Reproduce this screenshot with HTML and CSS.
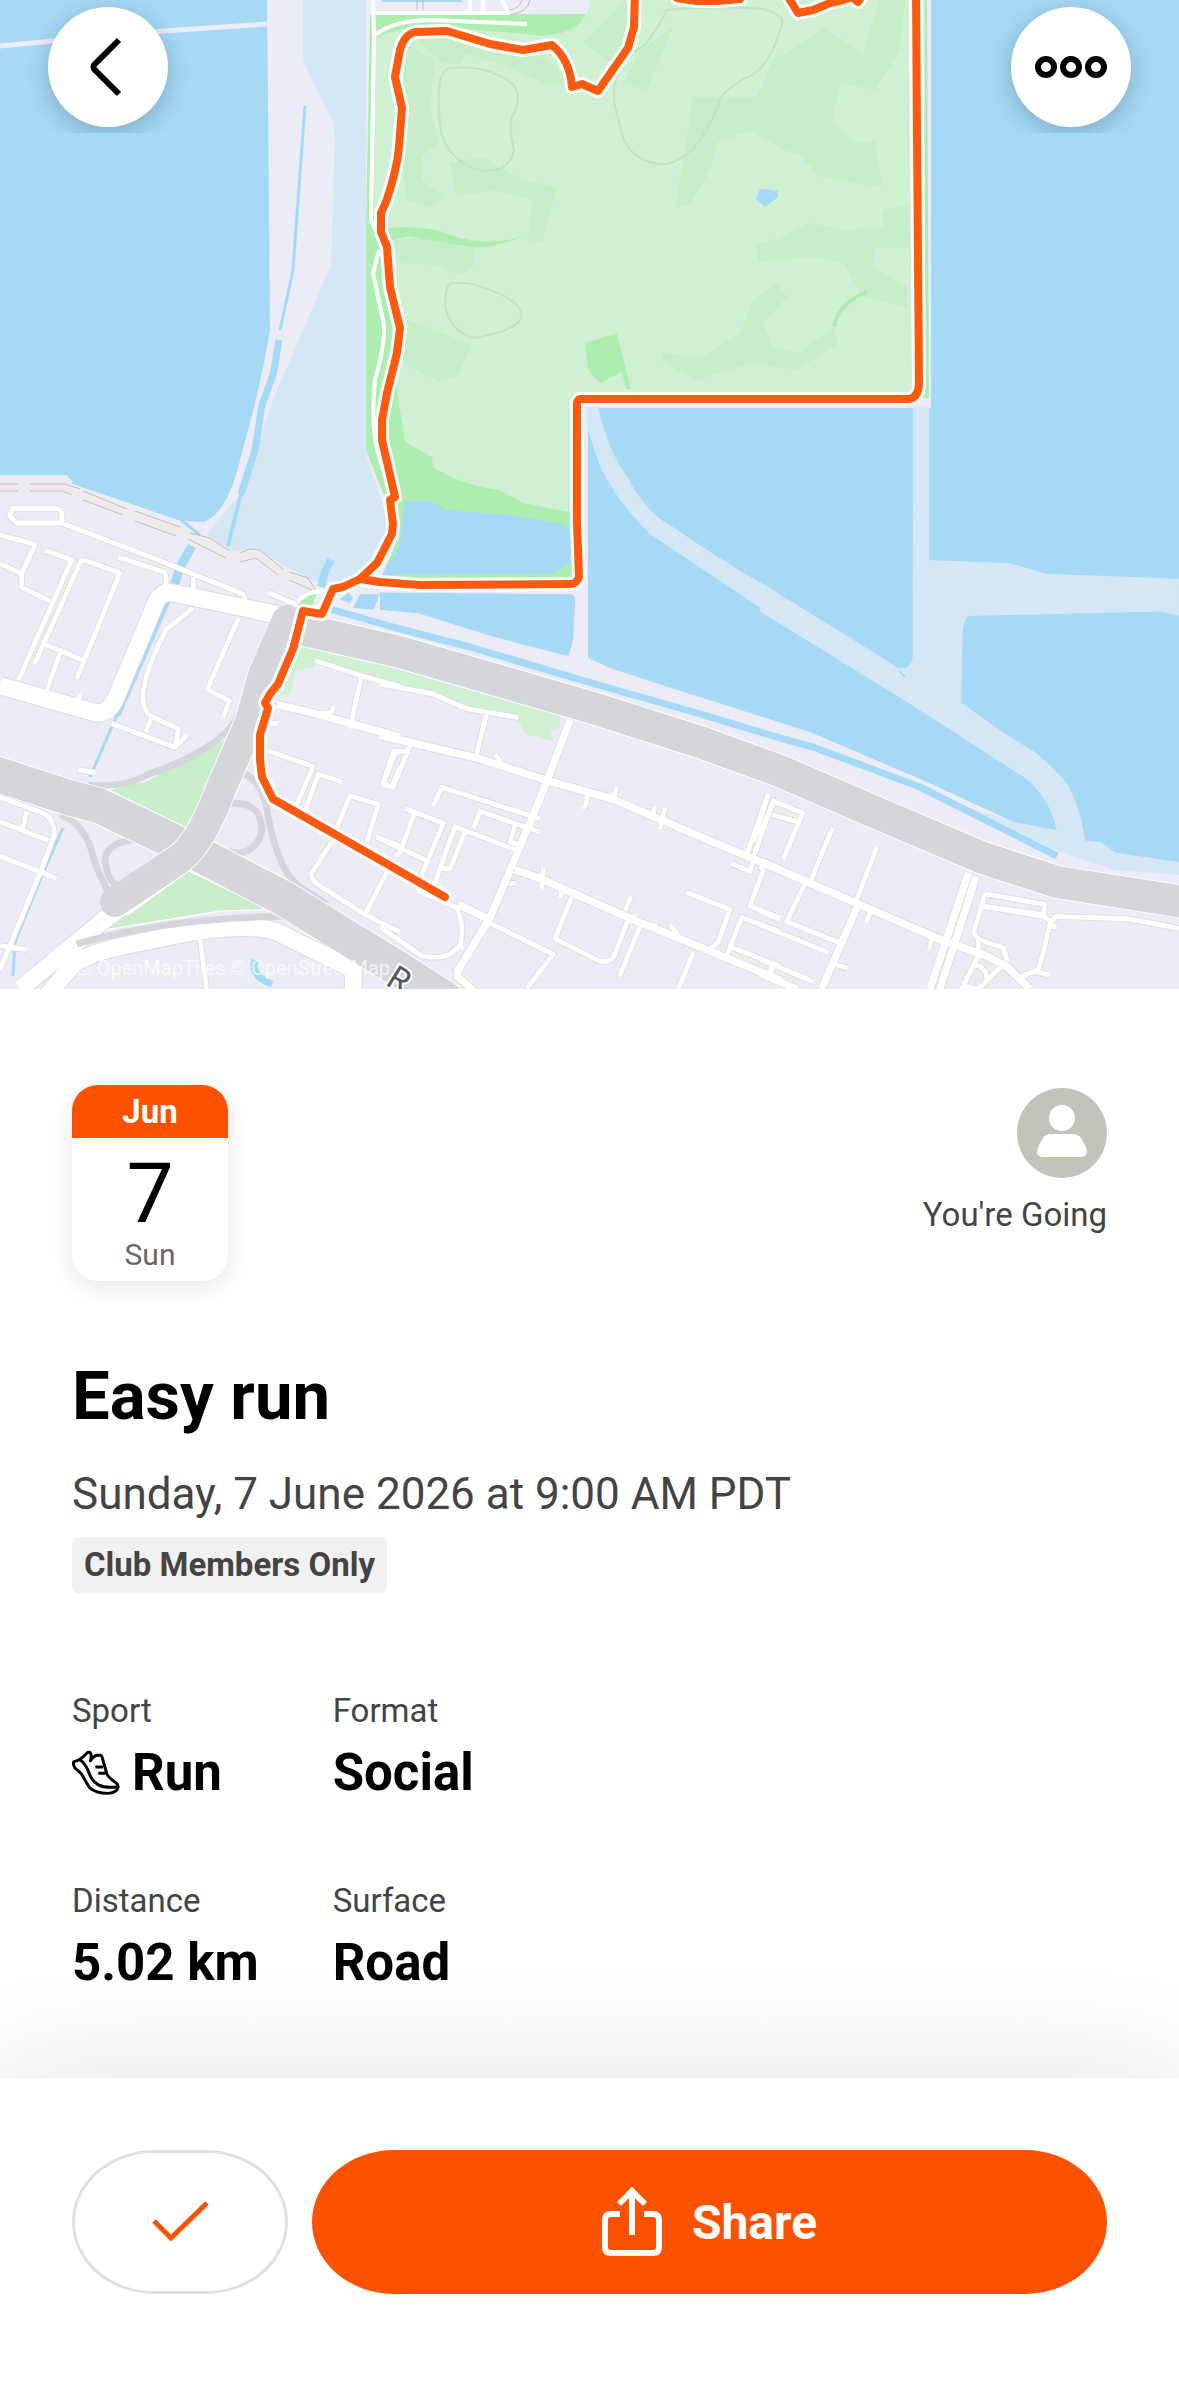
FILE: index.html
```html
<!DOCTYPE html>
<html lang="en">
<head>
  <meta charset="UTF-8" />
  <meta name="viewport" content="width=device-width, initial-scale=1.0"/>
  <title>Easy run</title>
  <link rel="stylesheet" href="styles.css">
</head>
<body>
  <header class="hero">
    <svg class="map" viewBox="0 0 1179 989" preserveAspectRatio="xMidYMid slice" role="img" aria-label="Route map">
      <defs>
        <!-- streets, one set for each tile of the map -->
        <g id="streets-sw" transform="matrix(.3333 0 0 .3444 0 460)">
          <path d="M40 140H165Q185 142 185 160V183H50L28 162ZM185 183L500 300L730 390Q740 405 730 412M355 282L490 325Q502 335 498 370M580 340V375M0 218L105 245L65 330V370L150 410M0 300L65 330M135 262L215 290L55 640M245 288L105 590M245 288L360 328L230 635M135 535L245 580M180 560L140 670M580 430L500 490Q430 620 428 690Q430 730 455 745L535 780L525 835L335 765M455 745L438 790M525 835L560 800M715 460L622 665L688 700L668 750M805 385L890 420M0 980L130 1025Q165 1045 163 1090L120 1200L0 1480M0 1050L145 1105M80 1020L68 1070M0 1150L170 1215M0 1410L80 1422M600 1390L620 1536M235 900L285 907M240 680L232 705M945 582L1080 625L1200 658M1085 625L1050 780M805 845L940 890L890 1000M1025 935L955 912L915 1020M800 765H835M965 735Q1000 740 1000 715M1200 850L1180 845L1148 942L1175 950L1200 890M1100 1110L1135 1000L1050 975L1005 1080M1130 1095L1200 1120M995 1110L935 1200Q935 1220 950 1230L1095 1320L1200 1370M1095 1320L1180 1160"/>
          <path class="wide" d="M830 710L940 735L1200 805"/>
          <path class="main" d="M0 655L290 735Q330 733 348 690L465 420Q480 380 515 385L860 455M740 430L870 460M60 1536L350 1305M130 1568L215 1470Q250 1430 450 1395Q720 1335 830 1370L1060 1480V1568"/>
        </g>
        <g id="streets-s" transform="matrix(.3333 0 0 .3444 380 460)">
          <path d="M0 650L160 680L260 722L415 748M320 735L290 855M345 855L370 885M90 828L40 950L5 940M90 848L48 845L10 940M160 1005L185 950L480 1042M280 1070L300 1020L480 1080M405 1060L390 1110L420 1118M75 1012L190 1055L125 1205M105 1020L60 1140L45 1150M0 1100L145 1165M180 1185L225 1065L415 1135M255 1080L210 1188L180 1185L165 1230M110 1250L230 1300Q255 1350 240 1410L250 1420M0 1355L125 1440Q180 1450 210 1435L240 1410M330 1345L520 1435L440 1536M575 1270L525 1390L660 1455Q700 1465 710 1420L750 1320M780 1355L718 1500M735 1310L752 1268M765 1320L750 1345M490 1185L485 1245M545 1255L540 1270M388 1230H405M620 975Q625 1000 608 1012M710 950L700 985M825 1005L820 1025M855 1010L840 1072M1165 970L1100 1145M1200 1000L1180 990L1118 1160M1055 1172L1110 1195L1120 1165M1150 1190L1110 1295L1200 1330M918 1255L1050 1305L1015 1400L990 1420M1040 1440L1085 1328L1200 1370M1055 1415L1200 1470M1175 1470L1170 1490M940 1430L895 1536M825 1345V1360M870 1350L895 1378"/>
          <path class="wide" d="M0 800L290 865L500 930L700 985L1000 1110L1200 1190M570 755L490 960L330 1330L235 1480Q225 1500 245 1510L280 1540M405 1190L480 1215L760 1335L1000 1430L1200 1510M235 1290L330 1335"/>
        </g>
        <g id="streets-se" transform="matrix(.3333 0 0 .3444 760 460)">
          <path d="M25 970L-20 1110M0 1090L40 990L128 1025L70 1160M35 1030L110 1050M218 1068L165 1190L155 1220M350 1125L285 1290M135 1230L80 1340L235 1400M0 1180L10 1190M0 1310L60 1335M0 1350L205 1430M0 1450L160 1515M38 1475L30 1500M225 1465L262 1475M330 1310L318 1345M515 1390L508 1420M675 1260L855 1290L850 1320L665 1295L675 1260M665 1295L642 1370Q642 1395 730 1415L742 1455M665 1295L850 1325L880 1345M865 1350L890 1357M1257 1360L1100 1332L885 1325L868 1350Q860 1400 835 1480L785 1500M820 1485L868 1495M655 1390V1440L605 1536M640 1465Q680 1470 680 1510M735 1460L655 1536M610 1525L650 1536"/>
          <path class="wide" d="M0 1165L130 1220L560 1400L680 1440L740 1470L810 1536M295 1290L185 1536M0 1490L110 1536M625 1200L510 1536M648 1210L540 1536"/>
        </g>
      </defs>

      <rect class="land" width="1179" height="989"/>

      <!-- water and wetland, west side -->
      <path class="wetland" d="M303 0V60Q320 98 333 120L335 140L331 265L275 395L240 494L207 534L232 553L258 549L285 566L315 582H365L395 540L366 455V0Z"/>
      <path class="water" d="M0 0H267L268 100L270 330Q262 380 248 430L238 468Q225 515 203 522L187 521L77 485L66 475H0Z"/>
      <path class="land-line" d="M0 46L150 32L267 24" stroke-width="5"/>
      <path class="stream" d="M305 106L298 200L293 270L280 330" stroke-width="3"/>
      <path class="stream" d="M279 340L273 375L262 405L255 450L241 494" stroke-width="7"/>
      <path class="stream" d="M241 494L228 546" stroke-width="4"/>
      <path class="stream" d="M192 546L180 567L173 590" stroke-width="9"/>
      <path class="stream" d="M173 587L117 715" stroke-width="7"/>
      <path class="stream" d="M117 715L90 777M63 828L43 873L15 942L13 976" stroke-width="3"/>
      <path class="stream" d="M331 560L324 574L321 587" stroke-width="8"/>
      <path class="stream" d="M255 960Q250 976 272 984" stroke-width="7"/>

      <!-- railway along the shore -->
      <path class="stream" d="M72 482L180 519L200 535" stroke-width="3"/>
      <path class="rail-bed" d="M0 488H66L90 498L190 536L228 556L256 553L300 583L316 590"/>
      <path class="rail" d="M0 484H18M30 484H65L80 489M0 491H18M30 491H62L72 495M83 491L127 509M83 500L123 515M135 511L180 527M135 521L176 536M190 533L210 538L229 551M188 539L226 558M240 553L250 549L260 550L283 569M240 562L256 558L278 575M289 572L308 578L315 589M289 580L312 590"/>

      <!-- park -->
      <path class="meadow" d="M370 15L588 14L590 0H927L929 398L580 404L575 580H380L395 545L398 500L383 493L366 450V230Z"/>
      <path class="park" d="M374 40Q400 25 430 27Q500 31 540 36Q588 34 590 0H925V395H575L570 512L523 503L500 490Q460 485 433 467L432 457L405 442L400 410L397 393V320L390 240L385 228L374 215Z"/>
      <path class="wood" d="M405 43L435 60L430 110L440 140L422 157V180L445 197L430 207L407 200L400 147ZM450 163L483 157L523 180L557 187L542 243L527 240L533 200L493 190L457 197ZM393 240L427 238L475 250L473 267L460 275L433 265L400 263ZM408 320L472 345L457 377L440 382L403 363ZM415 37L470 37L550 60L572 87L543 83L507 67L467 53L460 65L440 62ZM583 43L625 0L632 20L613 65ZM673 27L647 90L623 83L640 50ZM693 97L757 97L773 60L800 45L823 27L863 53L880 0H905L900 50L875 90L840 83L833 120L855 143L875 140L882 187L820 177L800 155L780 148L750 130L718 142L710 170L690 205L675 207L683 160ZM757 245L780 237L810 223L847 230L883 227V210L910 205V247L875 248L873 267L908 287L907 307L863 297L843 263L817 257L757 262ZM663 353L703 357L740 333L753 300L777 283L787 297L763 323L773 347L800 353L833 327L838 343L797 370L750 363L697 380L663 363Z"/>
      <path class="meadow" d="M385 228Q430 225 450 235Q490 248 527 235Q490 250 470 247Q430 240 410 236L392 240ZM585 343L617 333L631 389H626L622 372L600 383L588 370Z"/>
      <path class="meadow-line" d="M867 292Q838 303 834 327"/>
      <path class="contour" d="M450 68Q473 66 490 72Q517 80 518 97Q518 107 512 117Q509 133 514 150Q510 172 483 171Q450 163 441 133Q437 100 440 80Q445 68 450 68M450 284Q465 280 485 288Q520 300 522 315Q520 330 475 338Q450 332 445 305Q445 288 450 284M667 10Q720 5 765 9Q785 17 782 23Q770 70 745 78Q718 95 718 105Q695 165 660 164Q625 160 620 125Q610 95 616 80Q620 60 645 45Q660 25 667 10"/>
      <path class="water" d="M760 189L778 191V197L765 207L756 199ZM405 501H430L447 510L507 515L565 524L570 532V563L553 574L382 575L400 543Z"/>
      <rect class="land" x="372" y="0" width="214" height="14"/>
      <path class="water" d="M382 0H462V2H382Z"/>
      <path class="rail" d="M417 0V15M423 0V15M510 15Q528 12 530 0M510 10Q520 8 522 0"/>
      <path class="path-line" d="M373 0L374 35L371 220L380 240M376 13H510M470 0V12M483 0V12M502 0L508 12M375 35Q395 20 430 20L527 24M379 250L373 273L384 325Q385 345 375 380Q370 430 380 460L392 492"/>

      <!-- ponds, east side -->
      <path class="water" d="M931 0H1179V862L1120 855L1085 842H1057L927 782L810 732L690 694L610 668L588 658V408H931Z"/>
      <path class="wetland" d="M586 407H598Q608 450 626 475Q648 515 670 525Q720 560 780 594V621L650 534Q615 500 600 465Q590 440 586 420ZM914 407L929 405V560H914Z"/>
      <path class="wetland" transform="matrix(.3333 0 0 .3444 760 460)" d="M460 -150H508V290L750 300L860 330L1257 345V452L1200 440L625 453Q610 470 608 500L604 705L735 795L825 848Q900 910 920 940Q960 1000 975 1105L1025 1110L1065 1140L1257 1167V1205L1060 1190L880 1130L600 1000L760 1050L890 1075Q870 980 790 920L440 702L0 440V355L360 570L415 605L440 603Q457 590 458 570Z"/>
      <path class="stream" d="M899 671L905 677" stroke-width="2"/>
      <path class="land" d="M577 404H587V660L575 662Z"/>
      <path class="water" transform="matrix(.3333 0 0 .3444 380 460)" d="M0 385L575 390Q587 395 585 420L580 520L565 570L330 510L115 445L0 435ZM-20 435L-80 430L-60 390H0ZM-120 405L-95 385L-80 400L-90 415Z"/>
      <path class="stream" d="M330 609L400 629L470 647L595 684L690 711L780 738L813 747L920 787L1057 856" stroke-width="7"/>

      <!-- small greens by the highway -->
      <path class="park" d="M302 643L400 670L470 690L560 715V728L550 730L552 741L525 734L518 720L470 708L400 686L320 660L312 668L296 670L290 694L278 696Z"/>
      <path class="meadow" d="M298 605L306 592L318 590L312 606Z"/>
      <path class="path-line" d="M298 602Q306 590 330 591"/>

      <use class="casing" href="#streets-sw"/>
      <use class="casing" href="#streets-s"/>
      <use class="casing" href="#streets-se"/>
      <use class="street" href="#streets-sw"/>
      <use class="street" href="#streets-s"/>
      <use class="street" href="#streets-se"/>

      <!-- highways -->
      <g transform="matrix(.3333 0 0 .3444 0 460)">
        <path class="triangle" d="M300 962L440 930L690 800L565 1075ZM560 1190L810 1305L660 1310L310 1365Z"/>
        <path class="ramp" d="M660 1000Q750 985 775 1030Q805 1090 750 1130Q725 1150 640 1130M420 1100Q300 1110 318 1180Q330 1245 385 1245M265 945Q380 950 440 915Q690 830 725 720M715 905Q780 920 800 1010Q830 1190 900 1240L980 1290M180 1030Q240 1050 270 1120Q290 1200 340 1280M230 1405Q500 1330 850 1325"/>
      </g>
      <path class="highway-edge" d="M-10 772L67 797L100 806L187 848L283 898L400 970L450 1002" stroke-width="37"/>
      <path class="highway-edge" d="M300 629L400 652L593 708L700 742L780 771L877 813L983 858L1057 882L1190 903" stroke-width="34"/>
      <path class="highway" d="M-10 772L67 797L100 806L187 848L283 898L400 970L450 1002" stroke-width="35"/>
      <path class="highway-edge" d="M287 622L263 675L250 722L220 791Q198 850 173 863L118 903" stroke-width="32"/>
      <path class="highway" d="M288 626L300 629L400 652L593 708L700 742L780 771L877 813L983 858L1057 882L1190 903" stroke-width="32"/>
      <path class="highway" d="M287 620L263 675L250 722L220 791Q198 850 173 863L115 902" stroke-width="30" stroke-linecap="round"/>

      <g class="route">
        <path id="route" d="M445 897L273 799L262 777L260 760V735L268 708L265 703L270 694L278 684L293 649L303 611L322 614L333 589L343 587L360 579L377 563L392 534L393 524L390 500L395 497L382 440V420L387 393L397 353L400 328L390 287L387 247L381 232V213L386 202Q397 170 399 147L402 108L395 77L400 50Q404 35 415 32L447 31L490 44L523 50L552 45Q570 60 572 87L582 84L598 91L628 48L634 27L635 -8M677 -2L697 1H717L740 -1M787 -5L798 13L813 10L830 3L843 0L852 -3L858 2L862 -4M916 -5L917 133L919 382Q919 399 907 399H580Q577 400 577 404V522L579 577Q577 584 570 584L420 585L380 582L360 579"/>
        <use class="route-line" href="#route"/>
      </g>

      <text class="road-name" transform="translate(384 984) rotate(32)">R</text>
      <text class="credit" x="76" y="975">© OpenMapTiles © OpenStreetMap</text>
    </svg>

    <nav class="toolbar">
      <button class="round-button" type="button" aria-label="Back">
        <svg viewBox="0 0 120 120"><path d="M71 33L46 58Q45 60 46 62L71 87" fill="none" stroke="#000" stroke-width="6"/></svg>
      </button>
      <button class="round-button" type="button" aria-label="More options">
        <svg viewBox="0 0 120 120" fill="none" stroke="#000" stroke-width="6">
          <circle cx="35" cy="60" r="8"/><circle cx="60" cy="60" r="8"/><circle cx="85" cy="60" r="8"/>
        </svg>
      </button>
    </nav>
  </header>

  <main class="event">
    <div class="summary">
      <div class="date-card">
        <span class="month">Jun</span>
        <span class="day">7</span>
        <span class="weekday">Sun</span>
      </div>
      <div class="attendance">
        <svg class="avatar" viewBox="0 0 90 90" aria-hidden="true">
          <circle cx="45" cy="45" r="45" fill="#c3c2bb"/>
          <circle cx="45" cy="30" r="13" fill="#fff"/>
          <path d="M34 46H56Q61 46 64 50L69 59Q72 69 64 69H26Q18 69 21 59L26 50Q29 46 34 46Z" fill="#fff"/>
        </svg>
        <span>You're Going</span>
      </div>
    </div>

    <h1 class="title">Easy run</h1>
    <p class="when">Sunday, 7 June 2026 at 9:00 AM PDT</p>
    <span class="tag">Club Members Only</span>

    <dl class="details">
      <div>
        <dt>Sport</dt>
        <dd>
          <svg class="shoe" viewBox="96 236 146 138" fill="none" stroke="#000" stroke-width="9" stroke-linejoin="round" aria-hidden="true">
            <path d="M101 271L118 265Q130 257 143 243Q150 239 153 246Q156 256 152 268Q160 254 171 251H181Q186 251 188 258L202 308Q206 318 230 335Q238 342 236 350Q230 366 205 367Q168 366 150 350Q140 336 127 311Q122 303 105 290Q99 282 101 271Z"/>
            <path d="M119 264Q138 276 148 306Q156 329 176 341Q198 352 236 347"/>
            <path d="M167 287H190M176 306H198"/>
          </svg>
          Run
        </dd>
      </div>
      <div>
        <dt>Format</dt>
        <dd>Social</dd>
      </div>
      <div>
        <dt>Distance</dt>
        <dd>5.02 km</dd>
      </div>
      <div>
        <dt>Surface</dt>
        <dd>Road</dd>
      </div>
    </dl>
  </main>

  <footer class="actions">
    <button class="going-button" type="button" aria-label="Going">
      <svg viewBox="0 0 60 42" aria-hidden="true"><path d="M4 21L21 38L57 3" fill="none" stroke="#fc5200" stroke-width="5"/></svg>
    </button>
    <button class="share-button" type="button">
      <svg viewBox="0 0 60 70" fill="none" stroke="#fff" stroke-width="6" aria-hidden="true">
        <path d="M18 27H9Q3 27 3 33V60Q3 66 9 66H51Q57 66 57 60V33Q57 27 51 27H42"/>
        <path d="M30 48V5M17 17L30 4L43 17"/>
      </svg>
      Share
    </button>
  </footer>
</body>
</html>
```

FILE: styles.css
```css
* {
  box-sizing: border-box;
}

body {
  margin: 0;
  min-height: 100vh;
  display: flex;
  flex-direction: column;
  background: #fff;
  color: #000;
  font-family: Roboto, "Liberation Sans", sans-serif;
}

button {
  border: 0;
  padding: 0;
  font-family: inherit;
  cursor: pointer;
}

/* map */
.hero {
  position: relative;
}

.map {
  display: block;
  width: 100%;
  aspect-ratio: 1179 / 989;
}

.land { fill: #ebecf5; }
.water { fill: #a5d9f6; }
.wetland { fill: #d5e6f4; }
.park { fill: #d0f0d4; }
.wood { fill: #c6edc7; }
.meadow { fill: #aeedb0; }

.land-line,
.stream,
.rail-bed,
.rail,
.meadow-line,
.contour,
.path-line,
.ramp,
.highway,
.highway-edge {
  fill: none;
  stroke-linejoin: round;
}

.land-line { stroke: #ebecf5; }
.stream { stroke: #a5d9f6; }
.rail-bed { stroke: #efebea; stroke-width: 8; }
.rail { stroke: #ccb9b7; stroke-width: 1; }
.meadow-line { stroke: #aeedb0; stroke-width: 4; }
.contour { stroke: #bfe3c2; stroke-width: 2; }
.path-line { stroke: #fff; stroke-width: 4; }

.casing {
  fill: none;
  stroke: #dcdce2;
  stroke-width: 19;
  stroke-linejoin: round;
  --wide: 27;
  --main: 56;
}

.street {
  fill: none;
  stroke: #fff;
  stroke-width: 14;
  stroke-linejoin: round;
  --wide: 22;
  --main: 50;
}

.wide { stroke-width: var(--wide); }
.main { stroke-width: var(--main); }

.triangle {
  fill: #c9edc9;
  stroke: #fff;
  stroke-width: 4;
}

.ramp { stroke: #d5d6dc; stroke-width: 20; }
.highway { stroke: #d5d6dc; }
.highway-edge { stroke: #fff; }

.route {
  fill: none;
  stroke: #fff;
  stroke-width: 14;
  stroke-linejoin: round;
  stroke-linecap: round;
}

.route-line {
  stroke: #fc5a0f;
  stroke-width: 8;
}

.road-name {
  fill: #55565c;
  stroke: #fff;
  stroke-width: 4;
  paint-order: stroke;
  font-family: "Noto Sans", sans-serif;
  font-size: 34px;
}

.credit {
  fill: #fff;
  fill-opacity: 0.7;
  font-family: Roboto, sans-serif;
  font-size: 20px;
}

.toolbar {
  position: absolute;
  top: 0;
  left: 0;
  right: 0;
  height: 133px;
  padding: 7px 48px 0;
  display: flex;
  justify-content: space-between;
  overflow: hidden;
}

.round-button {
  width: 120px;
  height: 120px;
  border-radius: 50%;
  background: #fff;
  box-shadow: 0 6px 24px rgba(0, 0, 0, 0.22);
}

.round-button svg {
  display: block;
}

/* event */
.event {
  flex: 1;
  padding: 96px 72px 72px;
}

.summary {
  display: flex;
  justify-content: space-between;
}

.date-card {
  width: 156px;
  padding-bottom: 8px;
  display: flex;
  flex-direction: column;
  text-align: center;
  border-radius: 26px;
  overflow: hidden;
  box-shadow: 0 6px 24px rgba(0, 0, 0, 0.1);
}

.month {
  background: #fc5200;
  color: #fff;
  font-size: 33px;
  font-weight: bold;
  line-height: 53px;
}

.day {
  margin-top: 13px;
  font-size: 84px;
  line-height: 86px;
}

.weekday {
  color: #666;
  font-size: 30px;
  line-height: 36px;
}

.attendance {
  padding-top: 3px;
  display: flex;
  flex-direction: column;
  align-items: flex-end;
  gap: 17px;
  color: #444;
  font-size: 33px;
  line-height: 40px;
}

.avatar {
  width: 90px;
  height: 90px;
}

.title {
  margin: 77px 0 32px;
  font-size: 67px;
  line-height: 76px;
}

.when {
  margin: 0 0 15px;
  color: #444;
  font-size: 44px;
  line-height: 56px;
}

.tag {
  display: inline-block;
  padding: 0 12px;
  border-radius: 6px;
  background: #f1f1ef;
  color: #444;
  font-size: 33px;
  font-weight: bold;
  line-height: 56px;
}

.details {
  margin: 98px 0 0;
  display: grid;
  grid-template-columns: max-content max-content;
  gap: 78px 74px;
}

.details dt {
  margin-bottom: 12px;
  color: #444;
  font-size: 33px;
  line-height: 40px;
}

.details dd {
  margin: 0;
  display: flex;
  align-items: center;
  gap: 12px;
  font-size: 51px;
  font-weight: bold;
  line-height: 60px;
}

.shoe {
  width: 48px;
  height: 46px;
}

/* bottom bar */
.actions {
  padding: 72px 72px 102px;
  display: flex;
  gap: 24px;
  background: #fff;
  box-shadow: 0 0 120px rgba(0, 0, 0, 0.13);
}

.going-button {
  width: 216px;
  height: 144px;
  border: 3px solid #e0e0e0;
  border-radius: 82px / 72px;
  background: #fff;
}

.going-button svg {
  width: 60px;
  height: 42px;
}

.share-button {
  flex: 1;
  display: flex;
  align-items: center;
  justify-content: center;
  gap: 30px;
  border-radius: 82px / 72px;
  background: #fc5200;
  color: #fff;
  font-size: 48px;
  font-weight: bold;
}

.share-button svg {
  width: 60px;
  height: 70px;
}
```
